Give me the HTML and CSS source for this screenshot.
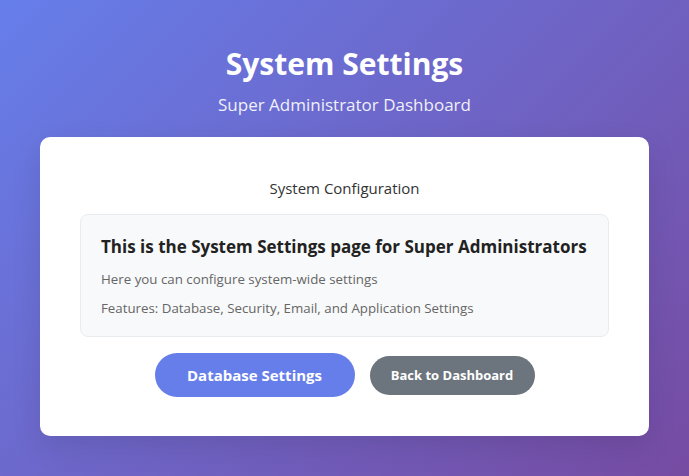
FILE: index.html
```html
<!DOCTYPE html>
<html lang="en">
<head>
<meta charset="utf-8">
<title>System Settings</title>
<link rel="stylesheet" href="styles.css">
</head>
<body>
  <div class="page">
    <header class="header">
      <h1 class="title">System Settings</h1>
      <p class="subtitle">Super Administrator Dashboard</p>
    </header>
    <main class="card">
      <p class="section-label">System Configuration</p>
      <div class="info">
        <h3 class="info-title">This is the System Settings page for Super Administrators</h3>
        <p class="info-text">Here you can configure system-wide settings</p>
        <p class="info-text">Features: Database, Security, Email, and Application Settings</p>
      </div>
      <div class="actions">
        <button class="btn btn-primary">Database Settings</button>
        <button class="btn btn-secondary">Back to Dashboard</button>
      </div>
    </main>
  </div>
</body>
</html>
```

FILE: styles.css
```css
* { box-sizing: border-box; }
html, body { height: 100%; }
body {
  margin: 0;
  font-family: "Open Sans", "Noto Sans", sans-serif;
  background: linear-gradient(135deg, #667eea 0%, #764ba2 100%);
  color: #333;
}
.page {
  padding: 40px;
}
.header {
  text-align: center;
  color: #fff;
}
.title {
  margin: 0;
  font-size: 30px;
  font-weight: 700;
  line-height: 48px;
}
.subtitle {
  margin: 4px 0 0;
  font-size: 17px;
  line-height: 26px;
  opacity: 0.9;
}
.card {
  margin-top: 19px;
  background: #fff;
  border-radius: 10px;
  padding: 40px 40px 39px;
  box-shadow: 0 10px 30px rgba(0,0,0,0.1);
  text-align: center;
}
.section-label {
  margin: 0;
  font-size: 15px;
  line-height: 22px;
  color: #333;
}
.info {
  margin-top: 15px;
  background: #f8f9fa;
  border: 1px solid #e9ecef;
  border-radius: 8px;
  padding: 20px 20px 18px;
  text-align: left;
}
.info-title {
  margin: 0 0 10px;
  font-size: 17px;
  line-height: 24px;
  font-weight: 700;
  color: #222;
  white-space: nowrap;
}
.info-text {
  margin: 0;
  font-size: 13.3px;
  line-height: 20px;
  color: #666;
}
.info-text + .info-text {
  margin-top: 9px;
}
.actions {
  margin-top: 16px;
  display: flex;
  justify-content: center;
  align-items: center;
  gap: 15px;
}
.btn {
  border: none;
  color: #fff;
  font-family: inherit;
  font-weight: 700;
  cursor: pointer;
}
.btn-primary {
  background: #667eea;
  width: 200px;
  height: 44px;
  border-radius: 22px;
  font-size: 15px;
}
.btn-secondary {
  background: #6c757d;
  width: 165px;
  height: 39px;
  border-radius: 20px;
  font-size: 13px;
}
```
